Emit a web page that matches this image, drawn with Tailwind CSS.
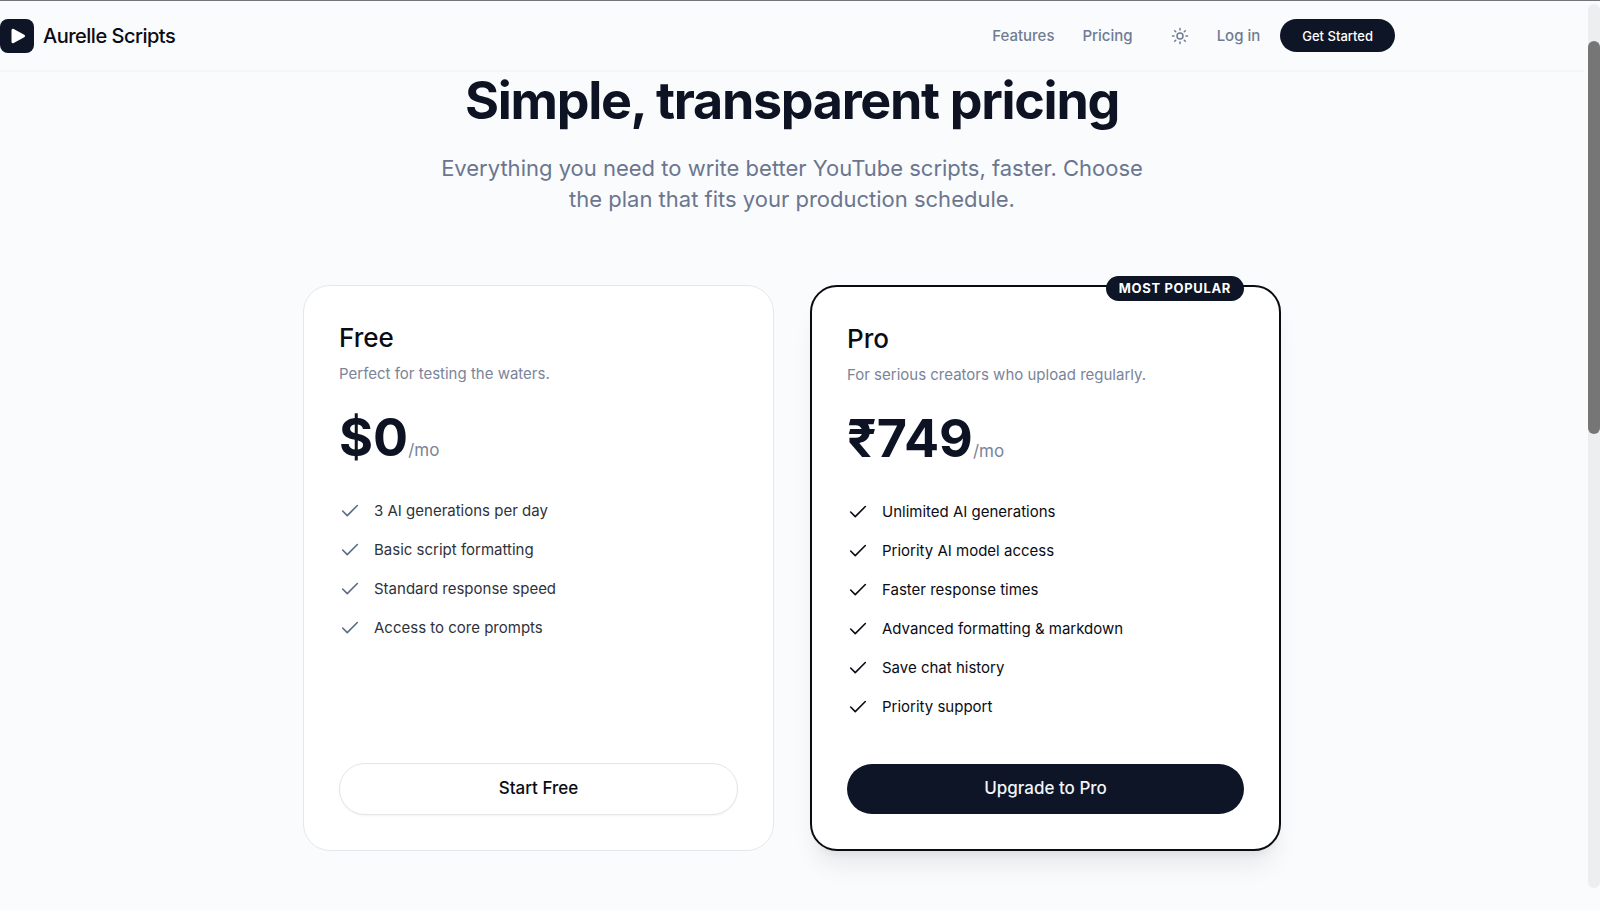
<!DOCTYPE html>
<html lang="en">
<head>
    <meta charset="UTF-8">
    <meta name="viewport" content="width=device-width, initial-scale=1.0">
    <title>Aurelle Scripts - Pricing</title>
    <script src="https://cdn.jsdelivr.net/npm/@tailwindcss/browser@4"></script>
</head>
<body class="min-h-screen overflow-x-hidden border-t border-[#737378] bg-[#fafbfd] font-['Inter',sans-serif] text-[#0a0c14] antialiased">
    <!-- Top bar -->
    <header class="mr-4 border-b-2 border-[#f4f5f7]">
        <div class="flex h-[69px] max-w-[1395px] items-center justify-between">
            <a href="#" class="flex items-center gap-[9px]">
                <svg class="h-[34px] w-[34px]" viewBox="0 0 34 34">
                    <rect width="34" height="34" rx="8" fill="#0d1526"/>
                    <path d="M13 11.2v11.6l10.5-5.8z" fill="#fff" stroke="#fff" stroke-width="3" stroke-linejoin="round"/>
                </svg>
                <span class="text-[20px] font-medium tracking-tight">Aurelle Scripts</span>
            </a>
            <nav class="flex items-center text-[15px] leading-6 font-medium text-[#707b93]">
                <a href="#features" class="mr-7">Features</a>
                <a href="#pricing" class="mr-[38px]">Pricing</a>
                <button type="button" aria-label="Toggle theme" class="mr-[28px]">
                    <svg class="h-[18px] w-[18px]" viewBox="0 0 24 24" fill="none" stroke="currentColor" stroke-width="2" stroke-linecap="round">
                        <circle cx="12" cy="12" r="4"/>
                        <path d="M12 2v2M12 20v2M4.93 4.93l1.41 1.41M17.66 17.66l1.41 1.41M2 12h2M20 12h2M6.34 17.66l-1.41 1.41M19.07 4.93l-1.41 1.41"/>
                    </svg>
                </button>
                <a href="#login" class="mr-5">Log in</a>
                <button type="button" class="h-[33px] rounded-full bg-[#0d1526] px-[22px] text-[13px] font-medium text-white">Get Started</button>
            </nav>
        </div>
    </header>

    <!-- Pricing -->
    <main id="pricing" class="mr-4 flex flex-col items-center px-4">
        <h1 class="text-center text-[52px] leading-[58px] font-bold tracking-tight text-[#0e1324]">Simple, transparent pricing</h1>
        <p class="mt-[23px] max-w-[720px] text-center text-[22px] leading-[31px] text-[#6b768e]">Everything you need to write better YouTube scripts, faster. Choose the plan that fits your production schedule.</p>

        <div class="mt-[70px] mb-[58px] grid w-full max-w-[978px] gap-9 md:grid-cols-2">
            <section class="flex flex-col rounded-[27px] border border-[#e4e7ec] bg-white px-[35px] pt-9 pb-[35px]">
                <h2 class="text-[26px] leading-8 font-medium">Free</h2>
                <p class="mt-2 text-[15px] leading-6 text-[#7b8499]">Perfect for testing the waters.</p>
                <div class="mt-[25px] flex items-baseline text-[#7b8499]">
                    <span class="text-[52px] leading-[54px] font-bold text-[#0e1324]">$0</span>
                    <span class="text-[17px]">/mo</span>
                </div>
                <ul class="mt-[34px] flex flex-1 flex-col gap-[15px] text-[15px] leading-6 text-[#30323a]">
                    <li class="flex items-center gap-[13px]"><svg class="h-[22px] w-[22px] text-[#5b6a86]"><use href="#check"/></svg>3 AI generations per day</li>
                    <li class="flex items-center gap-[13px]"><svg class="h-[22px] w-[22px] text-[#5b6a86]"><use href="#check"/></svg>Basic script formatting</li>
                    <li class="flex items-center gap-[13px]"><svg class="h-[22px] w-[22px] text-[#5b6a86]"><use href="#check"/></svg>Standard response speed</li>
                    <li class="flex items-center gap-[13px]"><svg class="h-[22px] w-[22px] text-[#5b6a86]"><use href="#check"/></svg>Access to core prompts</li>
                </ul>
                <button type="button" class="mt-[45px] h-[52px] rounded-full border border-[#e4e6ea] bg-white text-[17px] font-medium shadow-xs">Start Free</button>
            </section>

            <section class="relative flex flex-col rounded-[27px] border-2 border-[#0a0c12] bg-white px-[35px] pt-9 pb-[35px] shadow-xl shadow-black/7">
                <span class="absolute -top-[11px] right-[35px] rounded-full bg-[#0d1526] px-[13px] text-[13px] leading-[25px] font-bold tracking-wider text-white">MOST POPULAR</span>
                <h2 class="text-[26px] leading-8 font-medium">Pro</h2>
                <p class="mt-2 text-[15px] leading-6 text-[#7b8499]">For serious creators who upload regularly.</p>
                <div class="mt-[25px] flex items-baseline text-[#7b8499]">
                    <span class="text-[52px] leading-[54px] font-bold text-[#0e1324]">₹749</span>
                    <span class="text-[17px]">/mo</span>
                </div>
                <ul class="mt-[34px] flex flex-1 flex-col gap-[15px] text-[15px] leading-6">
                    <li class="flex items-center gap-[13px]"><svg class="h-[22px] w-[22px]"><use href="#check"/></svg>Unlimited AI generations</li>
                    <li class="flex items-center gap-[13px]"><svg class="h-[22px] w-[22px]"><use href="#check"/></svg>Priority AI model access</li>
                    <li class="flex items-center gap-[13px]"><svg class="h-[22px] w-[22px]"><use href="#check"/></svg>Faster response times</li>
                    <li class="flex items-center gap-[13px]"><svg class="h-[22px] w-[22px]"><use href="#check"/></svg>Advanced formatting &amp; markdown</li>
                    <li class="flex items-center gap-[13px]"><svg class="h-[22px] w-[22px]"><use href="#check"/></svg>Save chat history</li>
                    <li class="flex items-center gap-[13px]"><svg class="h-[22px] w-[22px]"><use href="#check"/></svg>Priority support</li>
                </ul>
                <button type="button" class="mt-[45px] h-[50px] rounded-full bg-[#0d1526] text-[17px] font-medium text-[#f1f4f8]">Upgrade to Pro</button>
            </section>
        </div>
    </main>

    <!-- Scrollbar -->
    <div class="fixed top-1 right-0 bottom-[22px] w-3 rounded-full bg-[#edeef0] pt-[37px]">
        <div class="h-[393px] rounded-full bg-[#767676]"></div>
    </div>

    <svg class="hidden">
        <symbol id="check" viewBox="0 0 24 24">
            <path d="M20 6L9 17l-5-5" fill="none" stroke="currentColor" stroke-width="1.75" stroke-linecap="round" stroke-linejoin="round"/>
        </symbol>
    </svg>
</body>
</html>
